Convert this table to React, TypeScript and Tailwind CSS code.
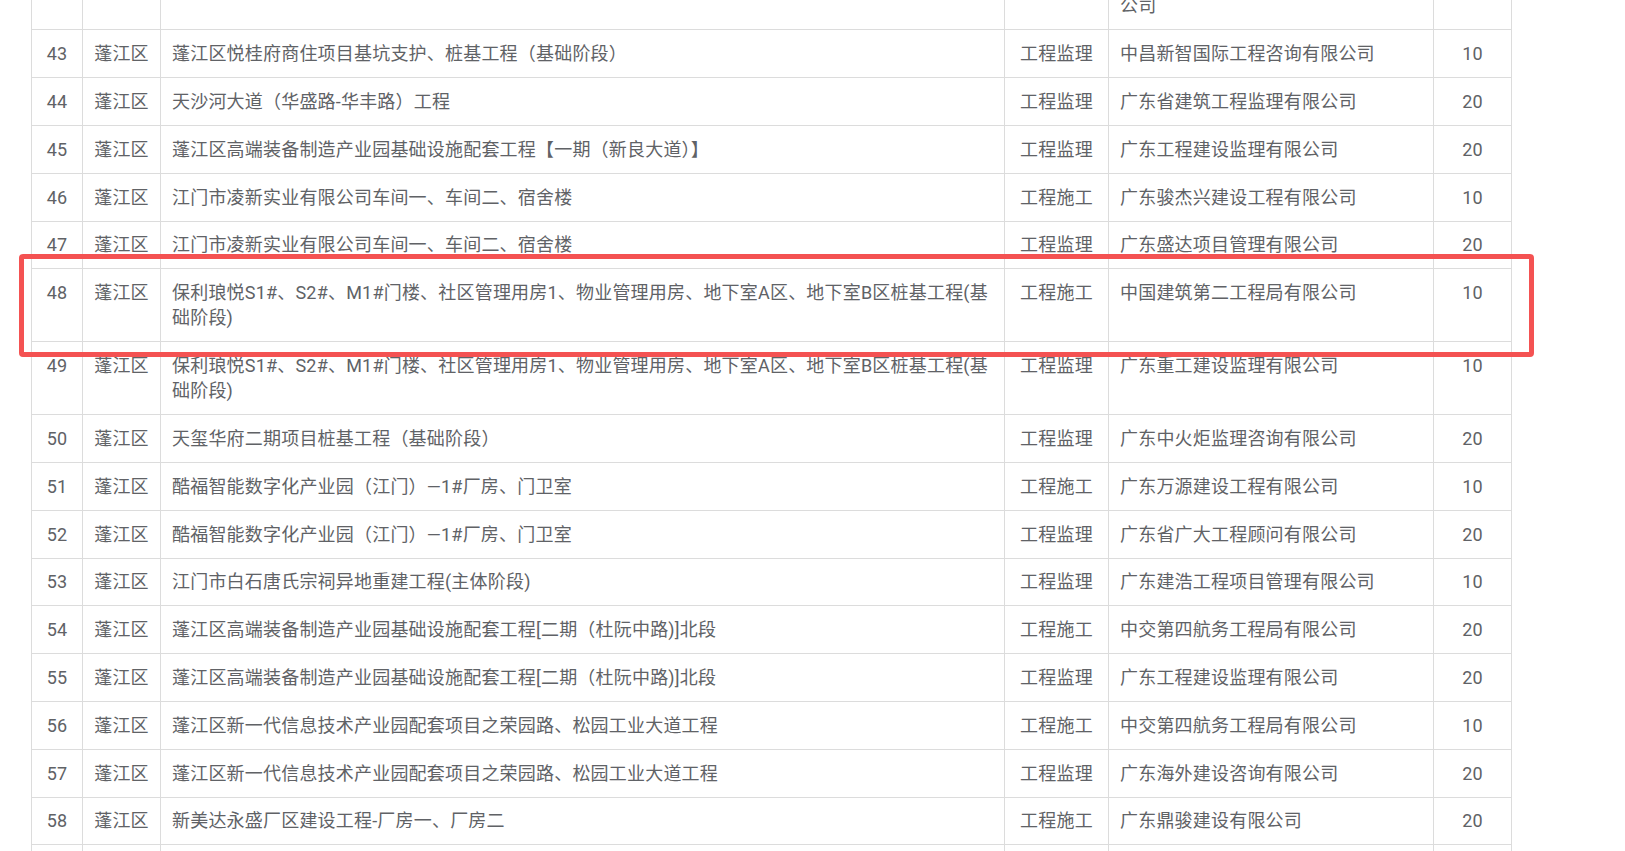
type Row = {
  no: number
  district: string
  project: string
  kind: string
  company: string
  score: number
}

const rows: Row[] = [
  { no: 42, district: '蓬江区', project: '蓬江区棠下镇工业园区配套道路工程', kind: '工程监理', company: '江门市新会区建筑工程监理咨询有限公司', score: 10 },
  { no: 43, district: '蓬江区', project: '蓬江区悦桂府商住项目基坑支护、桩基工程（基础阶段）', kind: '工程监理', company: '中昌新智国际工程咨询有限公司', score: 10 },
  { no: 44, district: '蓬江区', project: '天沙河大道（华盛路-华丰路）工程', kind: '工程监理', company: '广东省建筑工程监理有限公司', score: 20 },
  { no: 45, district: '蓬江区', project: '蓬江区高端装备制造产业园基础设施配套工程【一期（新良大道）】', kind: '工程监理', company: '广东工程建设监理有限公司', score: 20 },
  { no: 46, district: '蓬江区', project: '江门市凌新实业有限公司车间一、车间二、宿舍楼', kind: '工程施工', company: '广东骏杰兴建设工程有限公司', score: 10 },
  { no: 47, district: '蓬江区', project: '江门市凌新实业有限公司车间一、车间二、宿舍楼', kind: '工程监理', company: '广东盛达项目管理有限公司', score: 20 },
  { no: 48, district: '蓬江区', project: '保利琅悦S1#、S2#、M1#门楼、社区管理用房1、物业管理用房、地下室A区、地下室B区桩基工程(基础阶段)', kind: '工程施工', company: '中国建筑第二工程局有限公司', score: 10 },
  { no: 49, district: '蓬江区', project: '保利琅悦S1#、S2#、M1#门楼、社区管理用房1、物业管理用房、地下室A区、地下室B区桩基工程(基础阶段)', kind: '工程监理', company: '广东重工建设监理有限公司', score: 10 },
  { no: 50, district: '蓬江区', project: '天玺华府二期项目桩基工程（基础阶段）', kind: '工程监理', company: '广东中火炬监理咨询有限公司', score: 20 },
  { no: 51, district: '蓬江区', project: '酷福智能数字化产业园（江门）—1#厂房、门卫室', kind: '工程施工', company: '广东万源建设工程有限公司', score: 10 },
  { no: 52, district: '蓬江区', project: '酷福智能数字化产业园（江门）—1#厂房、门卫室', kind: '工程监理', company: '广东省广大工程顾问有限公司', score: 20 },
  { no: 53, district: '蓬江区', project: '江门市白石唐氏宗祠异地重建工程(主体阶段)', kind: '工程监理', company: '广东建浩工程项目管理有限公司', score: 10 },
  { no: 54, district: '蓬江区', project: '蓬江区高端装备制造产业园基础设施配套工程[二期（杜阮中路)]北段', kind: '工程施工', company: '中交第四航务工程局有限公司', score: 20 },
  { no: 55, district: '蓬江区', project: '蓬江区高端装备制造产业园基础设施配套工程[二期（杜阮中路)]北段', kind: '工程监理', company: '广东工程建设监理有限公司', score: 20 },
  { no: 56, district: '蓬江区', project: '蓬江区新一代信息技术产业园配套项目之荣园路、松园工业大道工程', kind: '工程施工', company: '中交第四航务工程局有限公司', score: 10 },
  { no: 57, district: '蓬江区', project: '蓬江区新一代信息技术产业园配套项目之荣园路、松园工业大道工程', kind: '工程监理', company: '广东海外建设咨询有限公司', score: 20 },
  { no: 58, district: '蓬江区', project: '新美达永盛厂区建设工程-厂房一、厂房二', kind: '工程施工', company: '广东鼎骏建设有限公司', score: 20 },
  { no: 59, district: '蓬江区', project: '新美达永盛厂区建设工程-厂房一、厂房二', kind: '工程监理', company: '广东华联工程咨询有限公司', score: 20 },
]

const cell = 'border-r border-b border-[#dcdcdc] py-[10.8px] leading-[25.2px]'

function App() {
  return (
    <main className="relative h-[851px] overflow-hidden bg-white font-['Roboto','Noto_Sans_CJK_SC',sans-serif] text-[18px] tracking-[0.2px] text-[#606266]">
      {/* list is scrolled: row 42 sits mostly above the viewport */}
      <div className="-mt-[42.7px] ml-[31px] w-[1481px] border-l border-[#dcdcdc]">
        {rows.map((row) => (
          <div
            key={row.no}
            className="grid grid-cols-[51px_78px_844px_104px_325px_78px]"
          >
            <div className={`${cell} text-center`}>{row.no}</div>
            <div className={`${cell} text-center`}>{row.district}</div>
            <div className={`${cell} px-[11px]`}>{row.project}</div>
            <div className={`${cell} text-center`}>{row.kind}</div>
            <div className={`${cell} px-[11px]`}>{row.company}</div>
            <div className={`${cell} text-center`}>{row.score}</div>
          </div>
        ))}
      </div>

      {/* annotation box around row 48 */}
      <div className="pointer-events-none absolute left-[19px] top-[254px] h-[103px] w-[1515px] rounded-[4px] border-[5px] border-[#f45252]" />
    </main>
  )
}

export default App
